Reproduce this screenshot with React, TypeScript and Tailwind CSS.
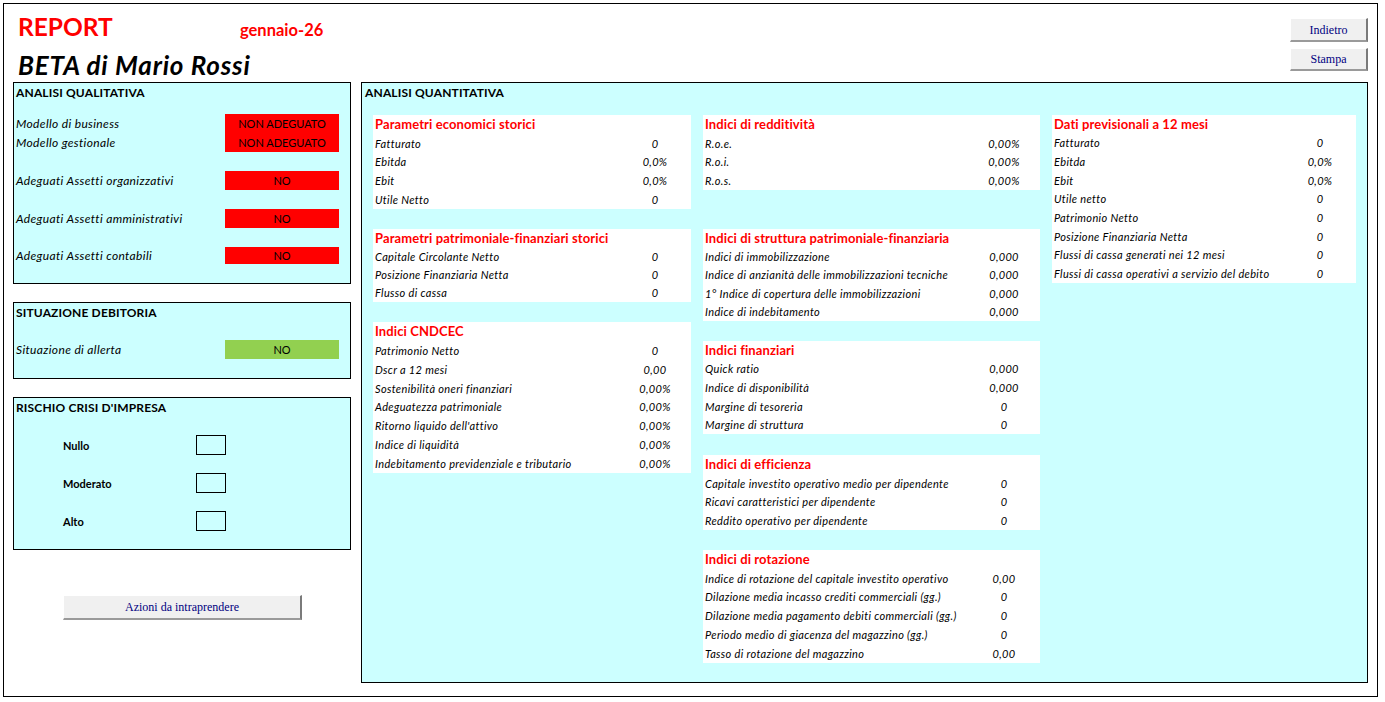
import React from "react";

type Row = { label: string; value: string };
type Box = { title: string; rows: Row[]; rowH: string; mt: string };

const col1: Box[] = [
  {
    title: "Parametri economici storici",
    rowH: "h-[18.8px]",
    mt: "mt-0",
    rows: [
      { label: "Fatturato", value: "0" },
      { label: "Ebitda", value: "0,0%" },
      { label: "Ebit", value: "0,0%" },
      { label: "Utile Netto", value: "0" },
    ],
  },
  {
    title: "Parametri patrimoniale-finanziari storici",
    rowH: "h-[18.25px]",
    mt: "mt-[20px]",
    rows: [
      { label: "Capitale Circolante Netto", value: "0" },
      { label: "Posizione Finanziaria Netta", value: "0" },
      { label: "Flusso di cassa", value: "0" },
    ],
  },
  {
    title: "Indici CNDCEC",
    rowH: "h-[18.875px]",
    mt: "mt-[20px]",
    rows: [
      { label: "Patrimonio Netto", value: "0" },
      { label: "Dscr a 12 mesi", value: "0,00" },
      { label: "Sostenibilità oneri finanziari", value: "0,00%" },
      { label: "Adeguatezza patrimoniale", value: "0,00%" },
      { label: "Ritorno liquido dell'attivo", value: "0,00%" },
      { label: "Indice di liquidità", value: "0,00%" },
      { label: "Indebitamento previdenziale e tributario", value: "0,00%" },
    ],
  },
];

const col2: Box[] = [
  {
    title: "Indici di redditività",
    rowH: "h-[18.75px]",
    mt: "mt-0",
    rows: [
      { label: "R.o.e.", value: "0,00%" },
      { label: "R.o.i.", value: "0,00%" },
      { label: "R.o.s.", value: "0,00%" },
    ],
  },
  {
    title: "Indici di struttura patrimoniale-finanziaria",
    rowH: "h-[18.4px]",
    mt: "mt-[39px]",
    rows: [
      { label: "Indici di immobilizzazione", value: "0,000" },
      { label: "Indice di anzianità delle immobilizzazioni tecniche", value: "0,000" },
      { label: "1° Indice di copertura delle immobilizzazioni", value: "0,000" },
      { label: "Indice di indebitamento", value: "0,000" },
    ],
  },
  {
    title: "Indici finanziari",
    rowH: "h-[18.6px]",
    mt: "mt-[20px]",
    rows: [
      { label: "Quick ratio", value: "0,000" },
      { label: "Indice di disponibilità", value: "0,000" },
      { label: "Margine di tesoreria", value: "0" },
      { label: "Margine di struttura", value: "0" },
    ],
  },
  {
    title: "Indici di efficienza",
    rowH: "h-[18.75px]",
    mt: "mt-[21px]",
    rows: [
      { label: "Capitale investito operativo medio per dipendente", value: "0" },
      { label: "Ricavi caratteristici per dipendente", value: "0" },
      { label: "Reddito operativo per dipendente", value: "0" },
    ],
  },
  {
    title: "Indici di rotazione",
    rowH: "h-[18.83px]",
    mt: "mt-[20px]",
    rows: [
      { label: "Indice di rotazione del capitale investito operativo", value: "0,00" },
      { label: "Dilazione media incasso crediti commerciali (gg.)", value: "0" },
      { label: "Dilazione media pagamento debiti commerciali (gg.)", value: "0" },
      { label: "Periodo medio di giacenza del magazzino (gg.)", value: "0" },
      { label: "Tasso di rotazione del magazzino", value: "0,00" },
    ],
  },
];

const col3: Box[] = [
  {
    title: "Dati previsionali a 12 mesi",
    rowH: "h-[18.67px]",
    mt: "mt-0",
    rows: [
      { label: "Fatturato", value: "0" },
      { label: "Ebitda", value: "0,0%" },
      { label: "Ebit", value: "0,0%" },
      { label: "Utile netto", value: "0" },
      { label: "Patrimonio Netto", value: "0" },
      { label: "Posizione Finanziaria Netta", value: "0" },
      { label: "Flussi di cassa generati nei 12 mesi", value: "0" },
      { label: "Flussi di cassa operativi a servizio del debito", value: "0" },
    ],
  },
];

function IndexBox({ box }: { box: Box }) {
  return (
    <div className={`bg-white ${box.mt}`}>
      <div className={`flex items-center pl-[2px] ${box.rowH}`}>
        <span className="text-[13px] font-bold leading-none tracking-[0.1px] text-[#ff0000]">{box.title}</span>
      </div>
      {box.rows.map((r) => (
        <div key={r.label} className={`flex items-center ${box.rowH}`}>
          <span className="flex-1 pl-[2px] text-[11px] italic leading-none tracking-[0.35px] whitespace-nowrap">
            {r.label}
          </span>
          <span className="w-[72px] text-center text-[11px] italic leading-none tracking-[0.3px]">{r.value}</span>
        </div>
      ))}
    </div>
  );
}

function Column({ boxes, width }: { boxes: Box[]; width: string }) {
  return (
    <div className={`flex flex-col ${width}`}>
      {boxes.map((b) => (
        <IndexBox key={b.title} box={b} />
      ))}
    </div>
  );
}

function SheetButton({ label, className }: { label: string; className: string }) {
  return (
    <div
      className={`flex items-center justify-center bg-[#f0f0f0] border-t border-l border-t-[#ffffff] border-l-[#ffffff] border-r-2 border-b-2 border-r-[#7a7a7a] border-b-[#9a9a9a] font-['Liberation_Serif',serif] text-[12px] leading-none text-[#000080] ${className}`}
    >
      {label}
    </div>
  );
}

function StatusRow({ label, value, color, h }: { label: string; value: string; color: string; h: string }) {
  return (
    <div className={`flex ${h}`}>
      <div className="flex w-[211px] items-center pl-[2px] text-[12px] italic leading-none tracking-[0.35px]">{label}</div>
      <div className={`flex w-[114px] items-center justify-center text-[11px] leading-none ${color}`}>{value}</div>
    </div>
  );
}

function RiskRow({ label }: { label: string }) {
  return (
    <div className="flex h-[20px] items-center">
      <div className="w-[182px] pl-[49px] text-[11px] font-bold leading-none">{label}</div>
      <div className="h-[20px] w-[30px] border border-black" />
    </div>
  );
}

function PanelTitle({ children, pl }: { children: React.ReactNode; pl: string }) {
  return (
    <div className={`flex h-[19px] items-center ${pl}`}>
      <span className="text-[12px] font-bold leading-none tracking-[0.15px]">{children}</span>
    </div>
  );
}

export default function App() {
  return (
    <div className="h-[702px] w-[1385px] bg-white p-[3px] font-['Lato',sans-serif] text-black">
      <div className="flex h-[694px] w-[1375px] flex-col border border-black">
        {/* header: title, period, company name and the two sheet buttons */}
        <div className="flex h-[78px] justify-between">
          <div className="pl-[14px] pt-[11px]">
            <div className="flex items-baseline">
              <div className="w-[222px] text-[24.5px] font-bold leading-none text-[#ff0000]">REPORT</div>
              <div className="text-[16.5px] font-bold leading-none text-[#ff0000]">gennaio-26</div>
            </div>
            <div className="mt-[12px] text-[26px] font-bold italic leading-none tracking-[0.8px]">BETA di Mario Rossi</div>
          </div>
          <div className="flex flex-col gap-[6px] pr-[9px] pt-[14px]">
            <SheetButton label="Indietro" className="h-[24px] w-[78px]" />
            <SheetButton label="Stampa" className="h-[23px] w-[78px]" />
          </div>
        </div>

        {/* body */}
        <div className="flex pl-[9px]">
          {/* qualitative side */}
          <div className="flex w-[338px] flex-col">
            <div className="h-[202px] border border-black bg-[#ccffff]">
              <PanelTitle pl="pl-[2px]">ANALISI QUALITATIVA</PanelTitle>
              <div className="h-[12px]" />
              <StatusRow label="Modello di business" value="NON ADEGUATO" color="bg-[#ff0000]" h="h-[19px]" />
              <StatusRow label="Modello gestionale" value="NON ADEGUATO" color="bg-[#ff0000]" h="h-[19px]" />
              <div className="h-[19px]" />
              <StatusRow label="Adeguati Assetti organizzativi" value="NO" color="bg-[#ff0000]" h="h-[19px]" />
              <div className="h-[19px]" />
              <StatusRow label="Adeguati Assetti amministrativi" value="NO" color="bg-[#ff0000]" h="h-[19px]" />
              <div className="h-[19px]" />
              <StatusRow label="Adeguati Assetti contabili" value="NO" color="bg-[#ff0000]" h="h-[17px]" />
            </div>

            <div className="mt-[18px] h-[77px] border border-black bg-[#ccffff]">
              <PanelTitle pl="pl-[2px]">SITUAZIONE DEBITORIA</PanelTitle>
              <div className="h-[18px]" />
              <StatusRow label="Situazione di allerta" value="NO" color="bg-[#92d050]" h="h-[19px]" />
            </div>

            <div className="mt-[18px] h-[153px] border border-black bg-[#ccffff]">
              <PanelTitle pl="pl-[2px]">RISCHIO CRISI D'IMPRESA</PanelTitle>
              <div className="h-[18px]" />
              <RiskRow label="Nullo" />
              <div className="h-[18px]" />
              <RiskRow label="Moderato" />
              <div className="h-[18px]" />
              <RiskRow label="Alto" />
            </div>

            <div className="mt-[45px] pl-[50px]">
              <SheetButton label="Azioni da intraprendere" className="h-[25px] w-[239px]" />
            </div>
          </div>

          {/* quantitative side */}
          <div className="ml-[10px] h-[601px] w-[1007px] border border-black bg-[#ccffff]">
            <PanelTitle pl="pl-[3px]">ANALISI QUANTITATIVA</PanelTitle>
            <div className="mt-[13px] flex gap-[12px] pl-[11px]">
              <Column boxes={col1} width="w-[318px]" />
              <Column boxes={col2} width="w-[337px]" />
              <Column boxes={col3} width="w-[304px]" />
            </div>
          </div>
        </div>
      </div>
    </div>
  );
}
